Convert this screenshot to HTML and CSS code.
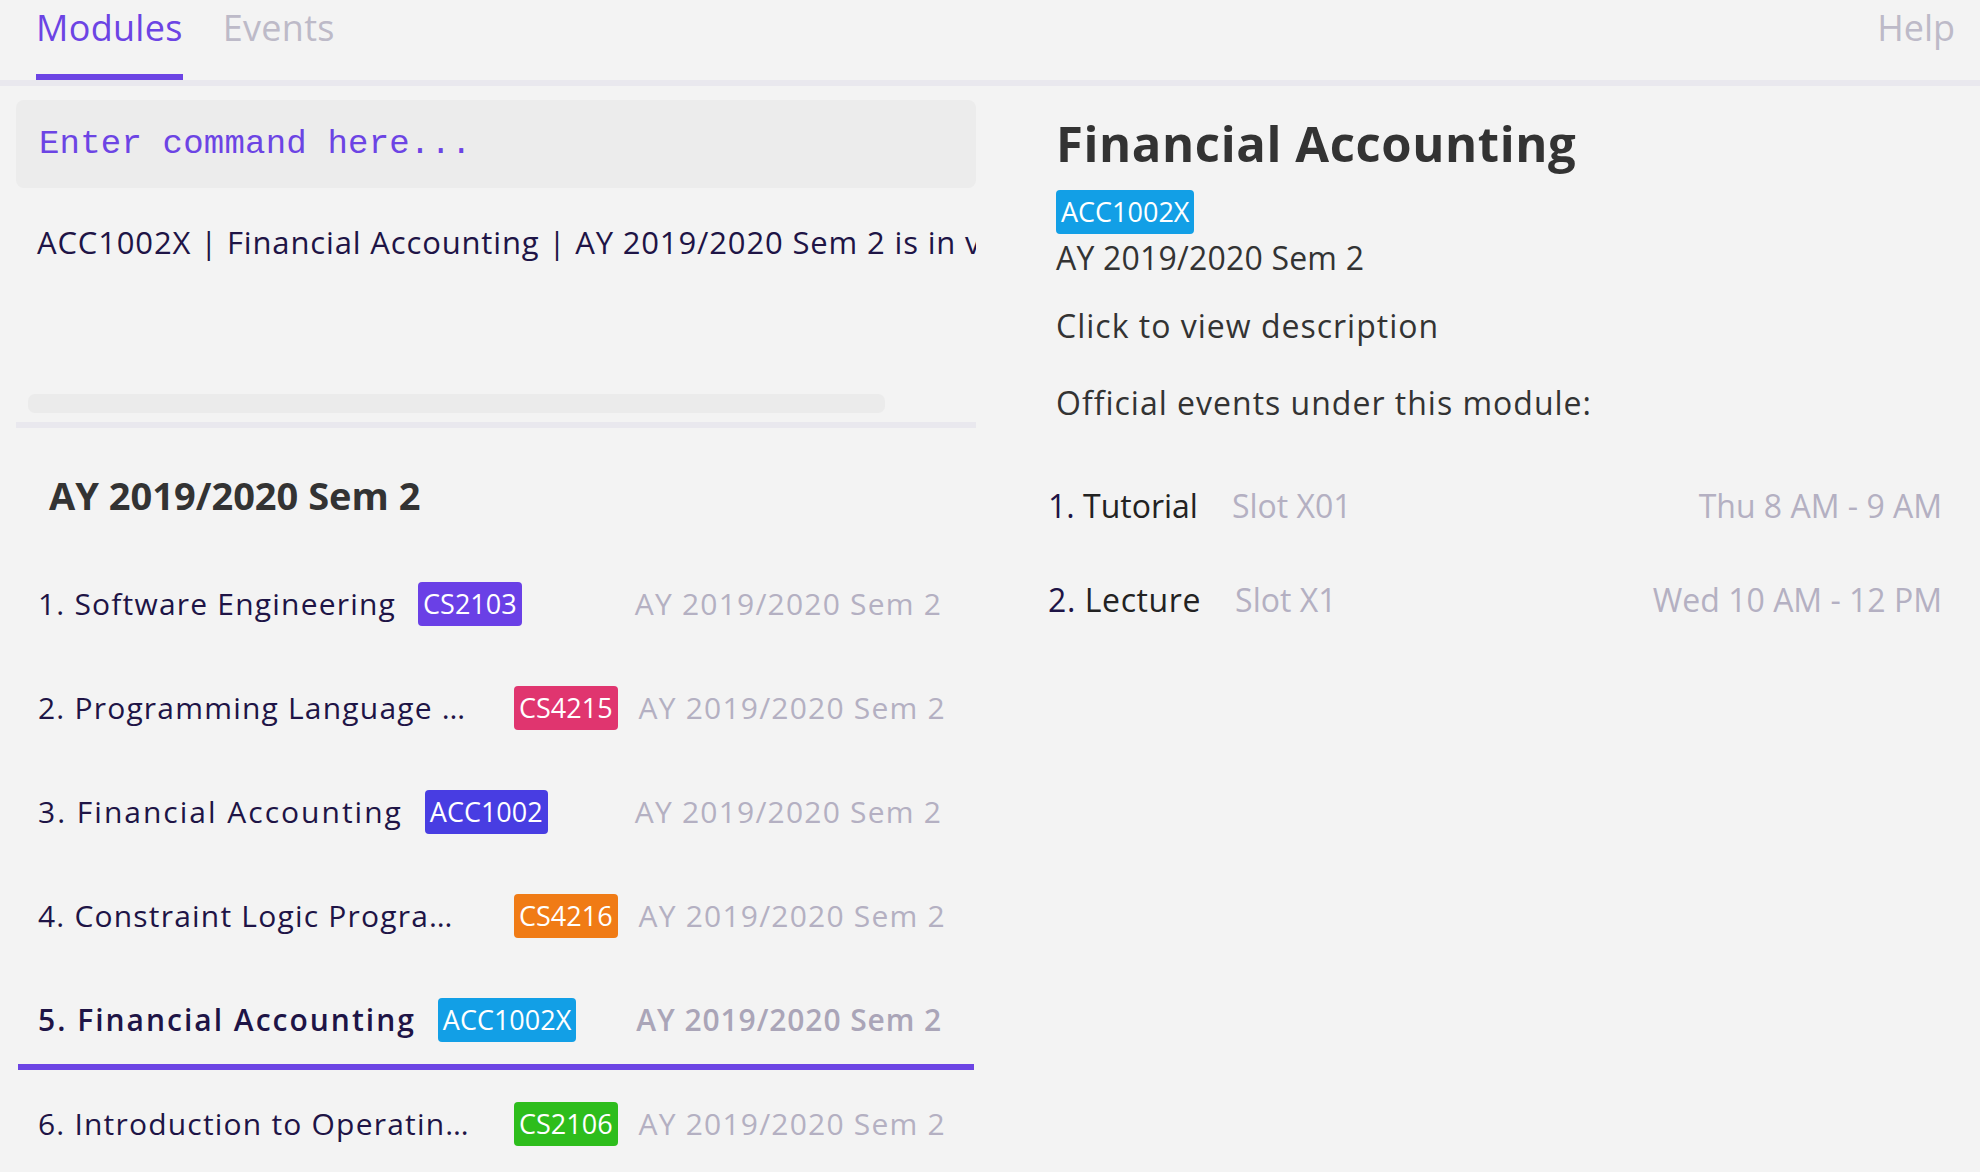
FILE: index.html
```html
<!DOCTYPE html>
<html lang="en">
<head>
<meta charset="utf-8">
<title>Modules</title>
<link rel="stylesheet" href="styles.css">
</head>
<body>
<header class="nav">
  <div class="tabs">
    <div class="tab tab--active">Modules</div>
    <div class="tab">Events</div>
  </div>
  <div class="help">Help</div>
</header>
<main class="layout">
  <section class="left">
    <div class="command">Enter command here...</div>
    <div class="result">
      <div class="result-text">ACC1002X | Financial Accounting | AY 2019/2020 Sem 2 is in view</div>
      <div class="result-bar"></div>
    </div>
    <div class="divider"></div>
    <h2 class="sem-title">AY 2019/2020 Sem 2</h2>
    <ul class="modules">
      <li class="mod">
        <span class="mod-name">1. Software Engineering</span>
        <span class="badge badge--purple">CS2103</span>
        <span class="mod-sem">AY 2019/2020 Sem 2</span>
      </li>
      <li class="mod">
        <span class="mod-name mod-name--clipped">2. Programming Language …</span>
        <span class="badge badge--pink">CS4215</span>
        <span class="mod-sem">AY 2019/2020 Sem 2</span>
      </li>
      <li class="mod">
        <span class="mod-name mod-name--wide">3. Financial Accounting</span>
        <span class="badge badge--indigo">ACC1002</span>
        <span class="mod-sem">AY 2019/2020 Sem 2</span>
      </li>
      <li class="mod">
        <span class="mod-name mod-name--clipped">4. Constraint Logic Progra…</span>
        <span class="badge badge--orange">CS4216</span>
        <span class="mod-sem">AY 2019/2020 Sem 2</span>
      </li>
      <li class="mod mod--selected">
        <span class="mod-name mod-name--wide">5. Financial Accounting</span>
        <span class="badge badge--blue">ACC1002X</span>
        <span class="mod-sem">AY 2019/2020 Sem 2</span>
      </li>
      <li class="mod">
        <span class="mod-name mod-name--clipped">6. Introduction to Operatin…</span>
        <span class="badge badge--green">CS2106</span>
        <span class="mod-sem">AY 2019/2020 Sem 2</span>
      </li>
    </ul>
  </section>
  <section class="right">
    <div class="detail">
      <h1 class="detail-title">Financial Accounting</h1>
      <span class="badge badge--blue detail-badge">ACC1002X</span>
      <div class="detail-sem">AY 2019/2020 Sem 2</div>
      <div class="detail-desc">Click to view description</div>
      <div class="detail-events">Official events under this module:</div>
    </div>
    <ol class="events">
      <li class="event">
        <span class="event-name"><span class="event-num">1.</span> Tutorial</span>
        <span class="event-slot">Slot X01</span>
        <span class="event-time">Thu 8 AM - 9 AM</span>
      </li>
      <li class="event">
        <span class="event-name event-name--wide"><span class="event-num">2.</span> Lecture</span>
        <span class="event-slot">Slot X1</span>
        <span class="event-time">Wed 10 AM - 12 PM</span>
      </li>
    </ol>
  </section>
</main>
</body>
</html>
```
FILE: styles.css
```css
* { box-sizing: border-box; }
html, body {
  margin: 0;
  padding: 0;
  background: #f3f3f3;
  font-family: "Open Sans", "Noto Sans", sans-serif;
  color: #1e1446;
  overflow: hidden;
}
.nav {
  display: flex;
  justify-content: space-between;
  align-items: flex-start;
  height: 86px;
  border-bottom: 6px solid #e9e8ee;
  padding: 0 25px 0 36px;
}
.tabs { display: flex; gap: 40px; }
.tab {
  font-size: 36px;
  line-height: 36px;
  padding-top: 10px;
  height: 80px;
  color: #bdbac8;
  font-weight: 500;
  letter-spacing: 0.3px;
  border-bottom: 6px solid transparent;
}
.tab--active {
  color: #6c44e4;
  border-bottom-color: #6c44e4;
}
.help {
  font-size: 36px;
  line-height: 36px;
  padding-top: 10px;
  color: #bdbac8;
  font-weight: 500;
}
.layout {
  display: grid;
  grid-template-columns: 960px 1fr;
  column-gap: 72px;
  padding: 0 38px 0 16px;
}
.left { display: flex; flex-direction: column; }
.command {
  margin-top: 14px;
  height: 88px;
  background: #ececec;
  border-radius: 8px;
  padding-left: 23px;
  font-family: "Liberation Mono", monospace;
  font-size: 34px;
  line-height: 88px;
  letter-spacing: 0.2px;
  color: #6c44e4;
}
.result {
  height: 234px;
  display: flex;
  flex-direction: column;
}
.result-text {
  margin-top: 33px;
  padding-left: 21px;
  font-size: 31px;
  line-height: 42px;
  letter-spacing: 0.85px;
  white-space: nowrap;
  overflow: hidden;
  color: #1e1446;
}
.result-bar {
  margin: auto 0 9px 12px;
  width: 857px;
  height: 19px;
  border-radius: 7px;
  background: #ebebeb;
}
.divider {
  height: 6px;
  background: #e9e8ee;
}
.sem-title {
  margin: 42px 0 36px;
  padding-left: 33px;
  font-size: 38px;
  line-height: 50px;
  font-weight: 700;
  color: #333333;
}
.modules {
  list-style: none;
  margin: 0;
  padding: 0;
}
.mod {
  display: flex;
  align-items: center;
  padding: 26px 32px 22px 20px;
  margin: 0 2px 6px;
  border-bottom: 6px solid transparent;
  font-size: 30px;
  line-height: 44px;
  letter-spacing: 1.2px;
}
.mod--selected {
  border-bottom-color: #6c44e4;
  font-weight: 600;
}
.mod-name {
  flex: 0 1 auto;
  min-width: 0;
  max-width: 454px;
  white-space: nowrap;
  overflow: hidden;
  text-overflow: ellipsis;
  color: #1e1446;
}
.mod-name--wide { letter-spacing: 2px; }
.mod-name--clipped { flex: 0 0 454px; }
.badge {
  display: inline-block;
  flex: none;
  margin-left: 22px;
  height: 44px;
  padding: 0 5px;
  border-radius: 4px;
  font-size: 27px;
  line-height: 44px;
  font-weight: 400;
  letter-spacing: 0;
  color: #ffffff;
}
.badge--purple { background: #6a40e6; }
.badge--pink { background: #e0356f; }
.badge--indigo { background: #483de2; }
.badge--orange { background: #f07b15; }
.badge--blue { background: #129fe6; }
.badge--green { background: #2dbd1c; }
.mod-sem {
  margin-left: auto;
  padding-left: 21px;
  white-space: nowrap;
  color: #b4b0c2;
  letter-spacing: 1.2px;
}
.mod--selected .mod-sem { color: #aaa5b8; letter-spacing: 0.9px; }
.right { padding-top: 27px; }
.detail { padding-left: 8px; color: #333333; }
.detail-title {
  margin: 0 0 17px;
  font-size: 49px;
  line-height: 60px;
  font-weight: 700;
  letter-spacing: 0.6px;
  color: #333333;
}
.detail-badge { margin-left: 0; }
.detail-sem {
  margin-top: 4px;
  font-size: 32px;
  line-height: 40px;
  letter-spacing: 0.2px;
}
.detail-desc {
  margin-top: 28px;
  font-size: 32px;
  line-height: 40px;
  letter-spacing: 1px;
}
.detail-events {
  margin-top: 37px;
  font-size: 32px;
  line-height: 40px;
  font-weight: 500;
  letter-spacing: 1px;
}
.events {
  list-style: none;
  margin: 63px 0 0;
  padding: 0;
}
.event {
  display: flex;
  gap: 34px;
  font-size: 32px;
  line-height: 40px;
  margin-bottom: 54px;
}
.event-name { color: #222222; }
.event-name--wide { letter-spacing: 0.6px; }
.event-num { color: #1e1446; }
.event-slot { color: #b4b0c2; }
.event-time { margin-left: auto; color: #b4b0c2; }
```
